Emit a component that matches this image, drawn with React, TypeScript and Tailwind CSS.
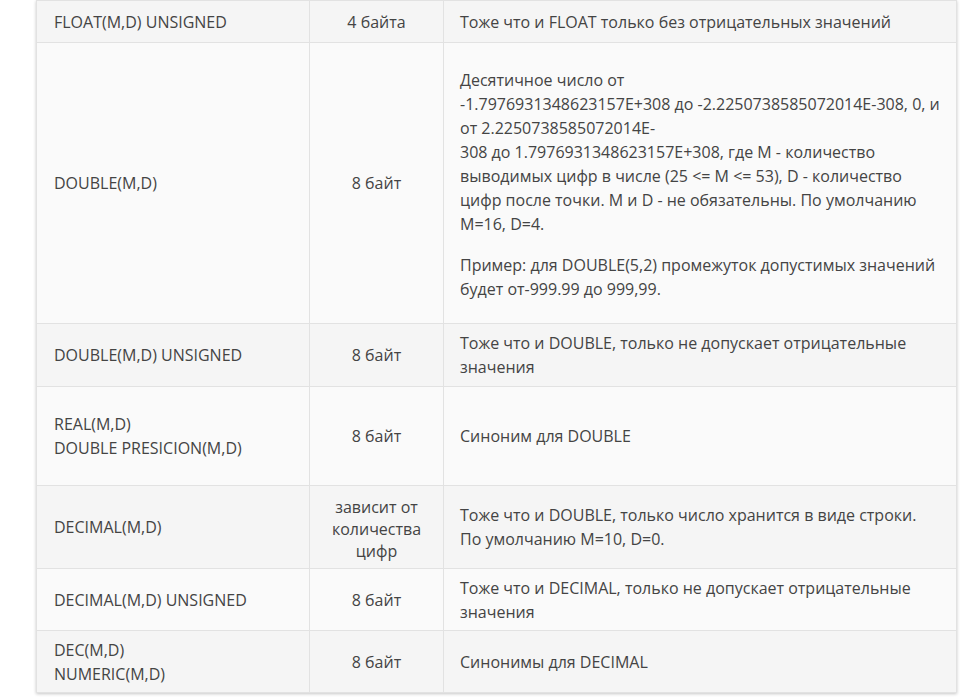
const font = { fontFamily: '"Open Sans", "Liberation Sans", sans-serif' };

type Row = {
  name: string[];
  size: string[];
  desc: string[][];
  h: string;
  bg: string;
  sizeLeading?: string;
  descPad?: string;
};

// строки таблицы, переносы заданы явно
const rows: Row[] = [
  {
    name: ["FLOAT(M,D) UNSIGNED"],
    size: ["4 байта"],
    desc: [["Тоже что и FLOAT только без отрицательных значений"]],
    h: "h-[42px]",
    bg: "bg-[#f5f5f5]",
  },
  {
    name: ["DOUBLE(M,D)"],
    size: ["8 байт"],
    desc: [
      [
        "Десятичное число от",
        "-1.7976931348623157E+308 до -2.2250738585072014E-308, 0, и",
        "от 2.2250738585072014E-",
        "308 до 1.7976931348623157E+308, где M - количество",
        "выводимых цифр в числе (25 <= M <= 53), D - количество",
        "цифр после точки. M и D - не обязательны. По умолчанию",
        "M=16, D=4.",
      ],
      [
        "Пример: для DOUBLE(5,2) промежуток допустимых значений",
        "будет от-999.99 до 999,99.",
      ],
    ],
    h: "h-[281px]",
    bg: "bg-[#fafafa]",
    descPad: "pt-[3px]",
  },
  {
    name: ["DOUBLE(M,D) UNSIGNED"],
    size: ["8 байт"],
    desc: [["Тоже что и DOUBLE, только не допускает отрицательные", "значения"]],
    h: "h-[63px]",
    bg: "bg-[#f5f5f5]",
  },
  {
    name: ["REAL(M,D)", "DOUBLE PRESICION(M,D)"],
    size: ["8 байт"],
    desc: [["Синоним для DOUBLE"]],
    h: "h-[99px]",
    bg: "bg-[#fafafa]",
  },
  {
    name: ["DECIMAL(M,D)"],
    size: ["зависит от", "количества", "цифр"],
    desc: [["Тоже что и DOUBLE, только число хранится в виде строки.", "По умолчанию M=10, D=0."]],
    h: "h-[83px]",
    bg: "bg-[#f5f5f5]",
    sizeLeading: "leading-[22px] pt-[3px]",
  },
  {
    name: ["DECIMAL(M,D) UNSIGNED"],
    size: ["8 байт"],
    desc: [["Тоже что и DECIMAL, только не допускает отрицательные", "значения"]],
    h: "h-[62px]",
    bg: "bg-[#fafafa]",
  },
  {
    name: ["DEC(M,D)", "NUMERIC(M,D)"],
    size: ["8 байт"],
    desc: [["Синонимы для DECIMAL"]],
    h: "h-[62px]",
    bg: "bg-[#f5f5f5]",
  },
];

export default function App() {
  return (
    <div className="min-h-[700px] bg-white pl-[36px] pr-[8px]" style={font}>
      <table className="w-[920px] table-fixed border-collapse border border-[#d4d4d4] text-[16px] leading-6 text-[#444] shadow-[0_1px_3px_rgba(0,0,0,0.22)]">
        <colgroup>
          <col className="w-[273px]" />
          <col className="w-[134px]" />
          <col className="w-[513px]" />
        </colgroup>
        <tbody>
          {rows.map((r, i) => (
            <tr key={i} className={`${r.h} ${r.bg}`}>
              {/* тип */}
              <td className="border border-[#e2e2e2] px-[17px] align-middle">
                {r.name.map((t) => (
                  <span key={t} className="block whitespace-nowrap">{t}</span>
                ))}
              </td>
              {/* размер */}
              <td className={`border border-[#e2e2e2] px-2 text-center align-middle ${r.sizeLeading ?? ""}`}>
                {r.size.map((t) => (
                  <span key={t} className="block whitespace-nowrap">{t}</span>
                ))}
              </td>
              {/* описание */}
              <td className={`border border-[#e2e2e2] px-4 align-middle ${r.descPad ?? ""}`}>
                <div className="flex flex-col gap-[17px]">
                  {r.desc.map((p, j) => (
                    <p key={j}>
                      {p.map((t) => (
                        <span key={t} className="block whitespace-nowrap">{t}</span>
                      ))}
                    </p>
                  ))}
                </div>
              </td>
            </tr>
          ))}
        </tbody>
      </table>
    </div>
  );
}
